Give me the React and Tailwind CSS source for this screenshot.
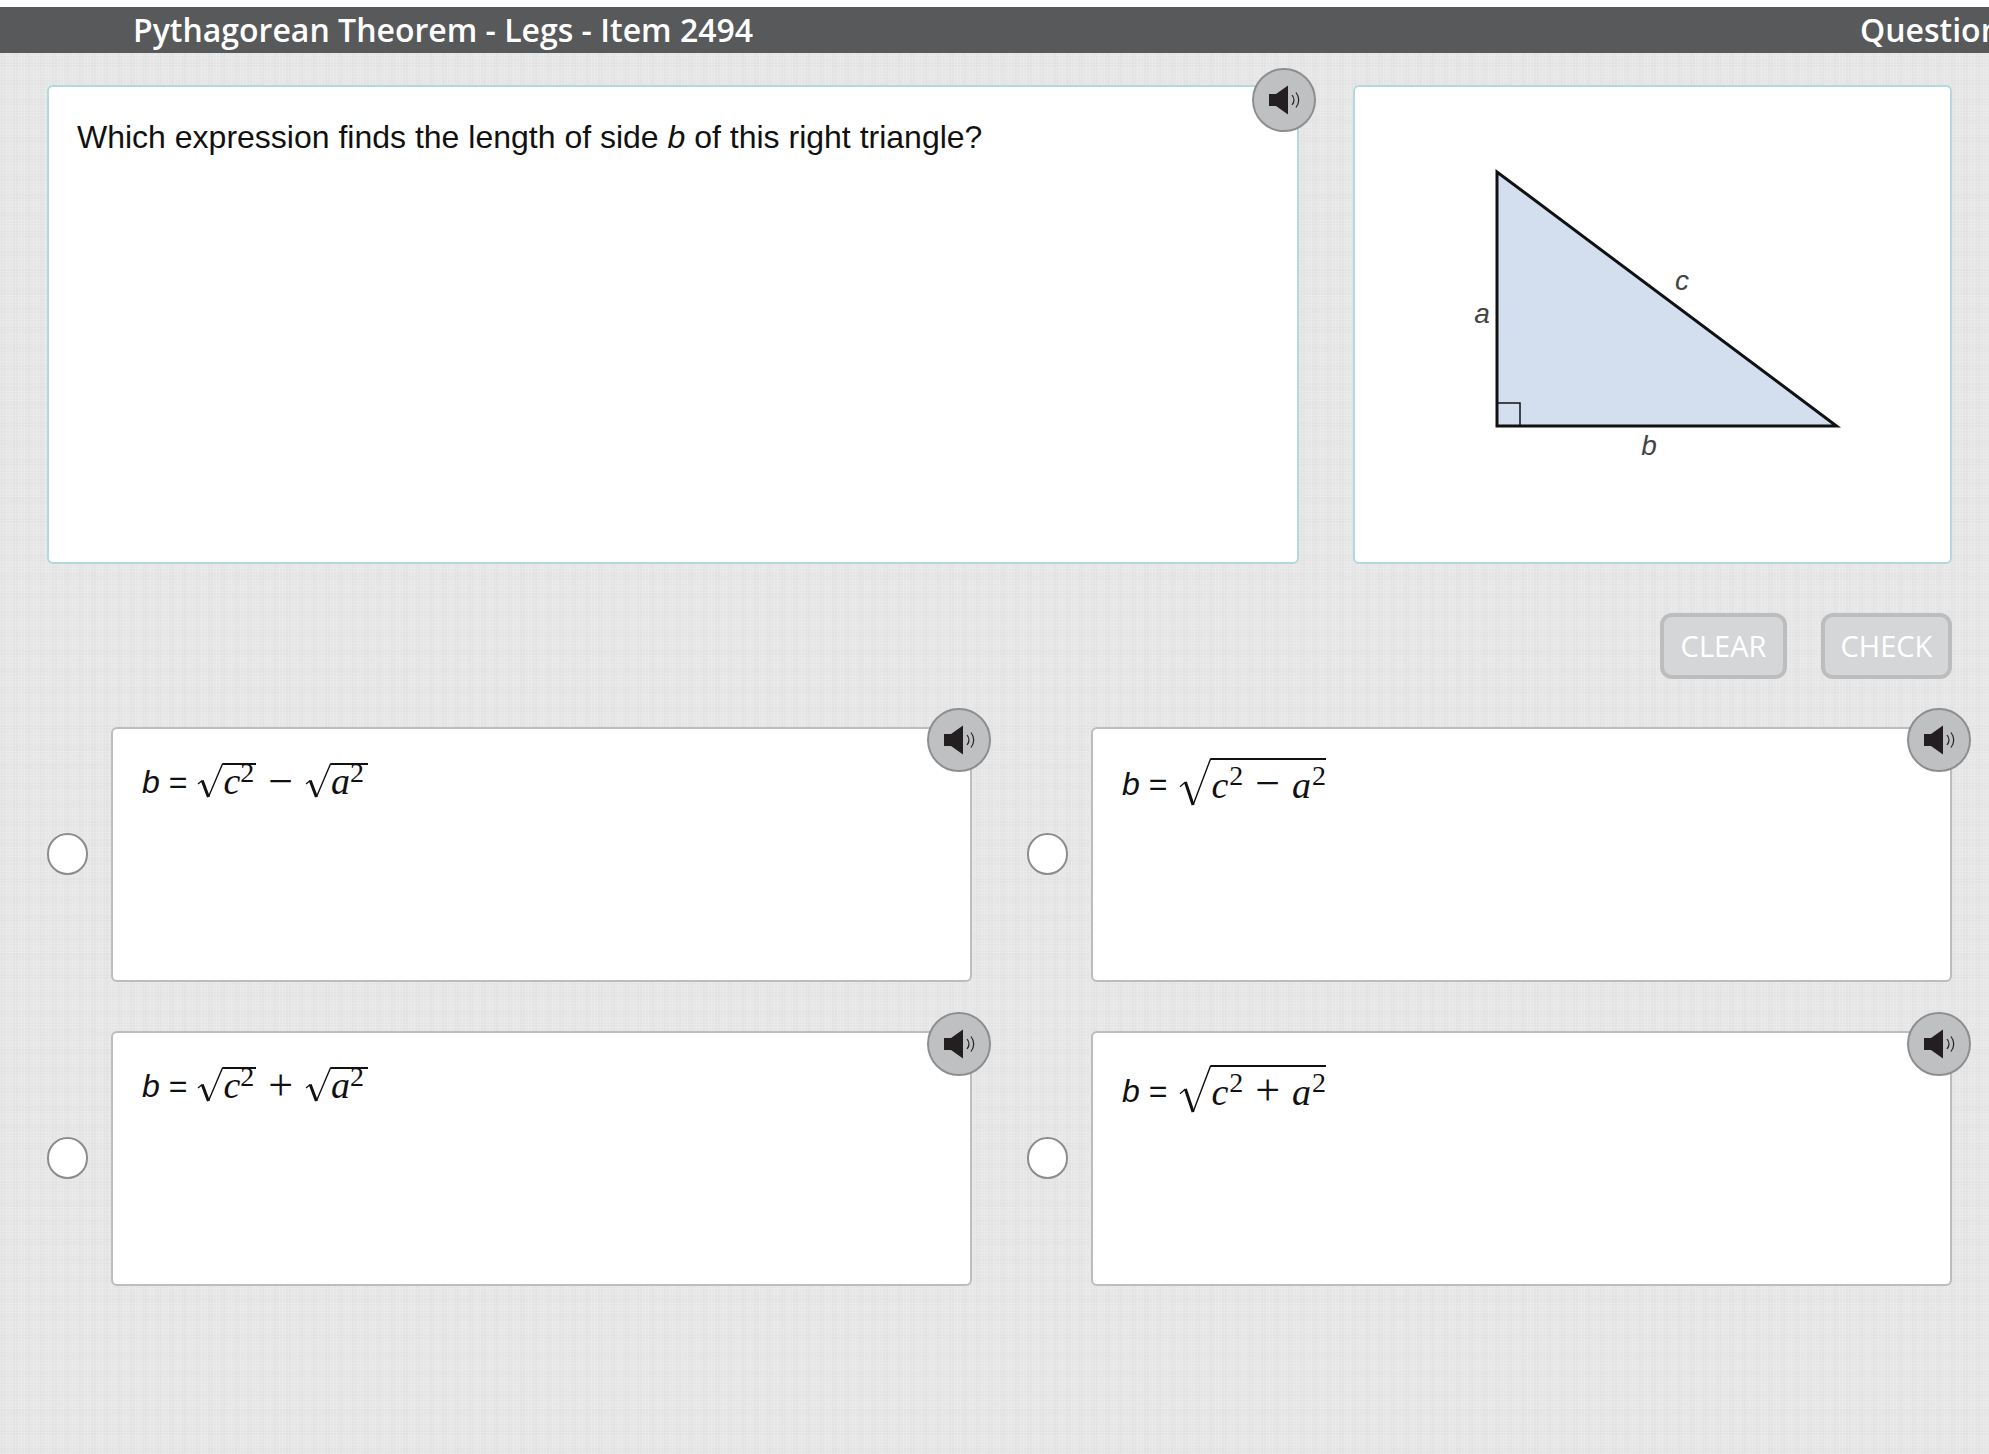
import React from 'react'

const SANS = 'font-["Liberation_Sans",Arial,sans-serif]'
const TOP_PAD = {
  'split-minus': 'pt-[28px]',
  'whole-minus': 'pt-[29px]',
  'split-plus': 'pt-[28px]',
  'whole-plus': 'pt-[32px]',
}

function Speaker({ className }) {
  return (
    <button className={`absolute w-[64px] h-[64px] rounded-full bg-[#bfc0c2] border-2 border-[#8d8e90] flex items-center justify-center ${className}`}>
      <svg width="34" height="32" viewBox="0 0 34 32" className="ml-[2px]">
        <path d="M1 10h7L20 1.500v29L8 22H1z" fill="#231f20" />
        <path d="M24 11c2.400 3 2.400 7 0 10M28 8.500c3.600 4.500 3.600 10.500 0 15" fill="none" stroke="#231f20" strokeWidth="1.200" />
      </svg>
    </button>
  )
}

function Radical({ w, h }) {
  // the root sign, its top stroke runs on into the bar of the radicand
  return (
    <svg width={w} height={h} viewBox={`0 0 ${w} ${h}`} className="shrink-0">
      <path d={`M1 ${h * 0.6}L${w * 0.2} ${h * 0.5}`} stroke="#111" strokeWidth="1.300" fill="none" />
      <path d={`M${w * 0.2} ${h * 0.5}L${w * 0.44} ${h - 1}`} stroke="#111" strokeWidth="3" fill="none" />
      <path d={`M${w * 0.44} ${h - 1}L${w - 0.5} 1H${w}`} stroke="#111" strokeWidth="1.400" fill="none" />
    </svg>
  )
}

function Root({ big, children }) {
  return (
    <span className="inline-flex items-start">
      {big ? <Radical w={32} h={48} /> : <Radical w={26} h={35} />}
      <span className={`border-t-2 border-[#111] whitespace-nowrap ${big ? 'h-[48px] leading-[42px] pt-[2px]' : 'h-[35px] leading-[32px]'}`}>{children}</span>
    </span>
  )
}

function Sq({ v, big, pad = '' }) {
  return (
    <span className={pad}>
      <i className={big ? 'mr-[1px]' : ''}>{v}</i>
      <sup className={`text-[28px] leading-none align-baseline relative ${big ? '-top-[13px]' : '-top-[12px]'}`}>2</sup>
    </span>
  )
}

function Lhs() {
  return (
    <span className={`${SANS} text-[32px] leading-none whitespace-nowrap relative top-[4px]`}>
      <i>b</i> =
    </span>
  )
}

function Formula({ kind }) {
  const op = kind.includes('minus') ? '−' : '+'
  if (kind.startsWith('split')) {
    return (
      <div className={`flex items-start text-[#111] font-['Liberation_Serif',serif] text-[38px] ${TOP_PAD[kind]}`}>
        <div className="flex items-end h-[37px]"><Lhs /></div>
        <div className="ml-[10px]"><Root><Sq v="c" pad="pr-[2px]" /></Root></div>
        <span className="mx-[12px] mt-[8px] text-[44px] leading-[34px]">{op}</span>
        <div><Root><Sq v="a" pad="pr-[4px]" /></Root></div>
      </div>
    )
  }
  return (
    <div className={`flex items-start text-[#111] font-['Liberation_Serif',serif] text-[38px] ${TOP_PAD[kind]}`}>
      <div className="flex items-end h-[38px]"><Lhs /></div>
      <div className="ml-[12px]">
        <Root big>
          <Sq v="c" big />
          <span className="mx-[12px] text-[44px] leading-none">{op}</span>
          <Sq v="a" big />
        </Root>
      </div>
    </div>
  )
}

function Option({ kind }) {
  return (
    <div className="flex items-center gap-[23px]">
      <span className="w-[41px] h-[42px] -mt-[1px] shrink-0 rounded-full bg-white border-[2px] border-[#8b8c8e]" />
      <div className="relative flex-1 h-[255px] bg-white border-2 border-[#bcbdbf] rounded-[6px] pl-[29px]">
        <Formula kind={kind} />
        <Speaker className="-top-[21px] -right-[21px]" />
      </div>
    </div>
  )
}

export default function App() {
  return (
    <div className="w-[1989px] h-[1454px] overflow-hidden bg-white pt-[7px]">
      <header className="h-[46px] bg-[#58595b] flex items-center pl-[133px] text-white font-['Open_Sans',sans-serif] font-semibold text-[32px] whitespace-nowrap overflow-hidden">
        <span className="w-[1727px] shrink-0">Pythagorean Theorem - Legs - Item 2494</span>
        <span className="shrink-0">Question</span>
      </header>

      <main className="h-[1401px] bg-[#e6e6e7] bg-[repeating-linear-gradient(90deg,rgba(255,255,255,0.14)_0_1px,transparent_1px_3px),repeating-linear-gradient(0deg,rgba(255,255,255,0.12)_0_1px,transparent_1px_3px),repeating-linear-gradient(90deg,rgba(0,0,0,0.01)_0_5px,transparent_5px_13px),repeating-linear-gradient(0deg,rgba(0,0,0,0.008)_0_7px,transparent_7px_19px)] pl-[47px] pr-[37px] pt-[32px]">
        <section className="flex gap-[54px]">
          <div className="relative w-[1252px] h-[479px] bg-white border-2 border-[#b5d8df] rounded-[6px] pl-[28px] pt-[30px]">
            <p className={`${SANS} text-[32px] leading-[40px] text-[#111]`}>
              Which expression finds the length of side <i>b</i> of this right triangle?
            </p>
            <Speaker className="-top-[19px] -right-[19px]" />
          </div>
          <div className="w-[599px] h-[479px] bg-white border-2 border-[#b5d8df] rounded-[6px]">
            <svg width="595" height="475" viewBox="0 0 595 475">
              <path d="M142 85V339H481.500Z" fill="#d3deee" stroke="#111" strokeWidth="3" strokeLinejoin="miter" />
              <path d="M142 316H165V339" fill="none" stroke="#111" strokeWidth="1.500" />
              <text x="127" y="236" fontFamily="Liberation Sans" fontStyle="italic" fontSize="28" fill="#444" textAnchor="middle">a</text>
              <text x="327" y="203" fontFamily="Liberation Sans" fontStyle="italic" fontSize="28" fill="#444" textAnchor="middle">c</text>
              <text x="294" y="368" fontFamily="Liberation Sans" fontStyle="italic" fontSize="28" fill="#444" textAnchor="middle">b</text>
            </svg>
          </div>
        </section>

        <div className="flex justify-end gap-[34px] mt-[49px]">
          <button className="w-[127px] h-[66px] rounded-[12px] bg-[#d5d6d8] border-[4px] border-[#bcbdbf] text-white font-['Open_Sans',sans-serif] text-[29px]">CLEAR</button>
          <button className="w-[131px] h-[66px] rounded-[12px] bg-[#d5d6d8] border-[4px] border-[#bcbdbf] text-white font-['Open_Sans',sans-serif] text-[29px]">CHECK</button>
        </div>

        <section className="grid grid-cols-[925px_925px] gap-x-[55px] gap-y-[49px] mt-[48px]">
          <Option kind="split-minus" />
          <Option kind="whole-minus" />
          <Option kind="split-plus" />
          <Option kind="whole-plus" />
        </section>
      </main>
    </div>
  )
}
